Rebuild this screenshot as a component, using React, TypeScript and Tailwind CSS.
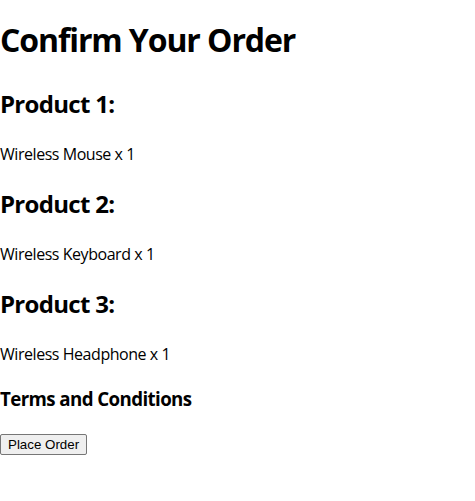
export default function App() {
  const products = [
    { n: 1, name: 'Wireless Mouse' },
    { n: 2, name: 'Wireless Keyboard' },
    { n: 3, name: 'Wireless Headphone' },
  ];
  return (
    <div className="flex flex-col items-start bg-white text-black font-['Open_Sans',sans-serif]">
      <h1 className="mt-[19px] text-[32px] leading-[42px] font-bold tracking-[-1.1px]">Confirm Your Order</h1>
      {products.map((p, i) => (
        <div key={p.n} className="flex flex-col items-start">
          <h2 className={(i === 0 ? 'mt-[27px]' : 'mt-[23px]') + ' text-[24px] leading-[32px] font-bold tracking-[-0.7px]'}>
            Product {p.n}:
          </h2>
          <p className="mt-[23px] text-[16px] leading-[22px] tracking-[-0.45px]">{p.name} x 1</p>
        </div>
      ))}
      <h3 className="mt-[20.5px] text-[18.72px] leading-[25px] font-bold tracking-[-0.6px]">Terms and Conditions</h3>
      <button
        type="button"
        className="mt-[23.75px] border border-[#767676] bg-[#efefef] rounded-[2px] px-[7px] py-[2px] text-[13.33px] leading-[15px] font-['Liberation_Sans',Arial,sans-serif] text-black"
      >
        Place Order
      </button>
    </div>
  );
}
